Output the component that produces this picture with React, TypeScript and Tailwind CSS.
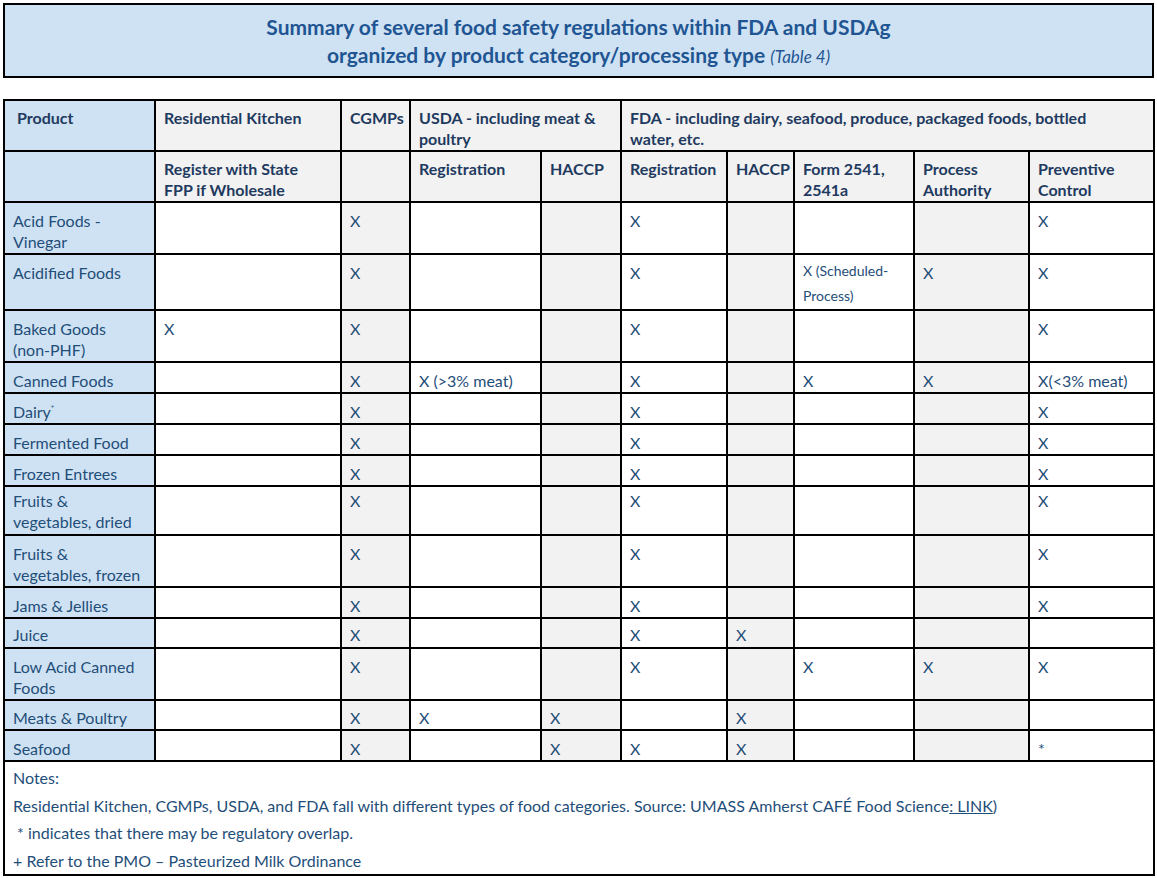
import React from "react";

type Cell = string | React.ReactNode;

const X = "X";

const rows: { product: React.ReactNode; cells: Cell[]; pad?: string }[] = [
  { product: <>Acid Foods -<br />Vinegar</>, cells: ["", X, "", "", X, "", "", "", X] },
  {
    product: "Acidified Foods",
    cells: [
      "", X, "", "", X, "",
      <span className="text-[14px] leading-[25px] block -mt-[4px]">X (Scheduled-<br />Process)</span>,
      X, X,
    ],
  },
  { product: <>Baked Goods<br />(non-PHF)</>, cells: [X, X, "", "", X, "", "", "", X] },
  { product: "Canned Foods", cells: ["", X, "X (>3% meat)", "", X, "", X, X, "X(<3% meat)"] },
  {
    product: <>Dairy<sup className="text-[6px] align-super">+</sup></>,
    cells: ["", X, "", "", X, "", "", "", X],
  },
  { product: "Fermented Food", cells: ["", X, "", "", X, "", "", "", X] },
  { product: "Frozen Entrees", cells: ["", X, "", "", X, "", "", "", X] },
  {
    product: <>Fruits &amp;<br />vegetables, dried</>,
    cells: ["", X, "", "", X, "", "", "", X],
    pad: "pt-[3px] pb-[2px]",
  },
  { product: <>Fruits &amp;<br />vegetables, frozen</>, cells: ["", X, "", "", X, "", "", "", X] },
  { product: "Jams & Jellies", cells: ["", X, "", "", X, "", "", "", X] },
  { product: "Juice", cells: ["", X, "", "", X, X, "", "", ""], pad: "pt-[5px] pb-[2px]" },
  { product: <>Low Acid Canned<br />Foods</>, cells: ["", X, "", "", X, "", X, X, X] },
  { product: "Meats & Poultry", cells: ["", X, X, X, "", X, "", "", ""], pad: "pt-[6px] pb-[1px]" },
  { product: "Seafood", cells: ["", X, "", X, X, X, "", "", "*"] },
];

// data columns with grey shading (index into cells)
const shaded = [1, 3, 5, 7];

const cellBase = "border-2 border-black align-top px-[8px] leading-[21px]";
const headBase = cellBase + " pt-[6px] pb-[1px] bg-[#f2f2f2] font-bold text-[#1f3a5f] text-left";

export default function App() {
  return (
    <div className="bg-white p-[3px] font-['Lato',sans-serif] text-[16px] text-[#1f4e79]">
      {/* title */}
      <div className="border-2 border-black bg-[#cfe2f3] pt-[8px] pb-[5px] text-center text-[#1f5592] font-bold text-[21px] leading-[28px]">
        <div>Summary of several food safety regulations within FDA and USDAg</div>
        <div>
          organized by product category/processing type{" "}
          <span className="font-normal italic text-[17px]">(Table 4)</span>
        </div>
      </div>

      <table className="mt-[21px] w-[1150px] table-fixed border-collapse border-2 border-black">
        <colgroup>
          <col className="w-[151px]" />
          <col className="w-[186px]" />
          <col className="w-[69px]" />
          <col className="w-[131px]" />
          <col className="w-[80px]" />
          <col className="w-[106px]" />
          <col className="w-[67px]" />
          <col className="w-[120px]" />
          <col className="w-[115px]" />
          <col className="w-[125px]" />
        </colgroup>
        <thead>
          <tr>
            <th className={cellBase + " pt-[6px] pb-[1px] pl-[12px] bg-[#cfe2f3] font-bold text-[#1f3a5f] text-left"}>
              Product
            </th>
            <th className={headBase}>Residential Kitchen</th>
            <th className={headBase}>CGMPs</th>
            <th colSpan={2} className={headBase}>
              <span className="whitespace-nowrap">USDA - including meat &amp;</span>
              <br />poultry
            </th>
            <th colSpan={5} className={headBase}>
              <span className="whitespace-nowrap">FDA - including dairy, seafood, produce, packaged foods, bottled</span>
              <br />water, etc.
            </th>
          </tr>
          <tr>
            <th className={cellBase + " pt-[6px] pb-[1px] bg-[#cfe2f3]"}></th>
            <th className={headBase}>Register with State<br />FPP if Wholesale</th>
            <th className={headBase}></th>
            <th className={headBase}>Registration</th>
            <th className={headBase}>HACCP</th>
            <th className={headBase}>Registration</th>
            <th className={headBase}>HACCP</th>
            <th className={headBase}>Form 2541,<br />2541a</th>
            <th className={headBase}>Process<br />Authority</th>
            <th className={headBase}>Preventive<br />Control</th>
          </tr>
        </thead>
        <tbody>
          {rows.map((r, i) => {
            const pad = r.pad ?? "pt-[7px] pb-[1px]";
            return (
              <tr key={i}>
                <td className={cellBase + " " + pad + " bg-[#cfe2f3] whitespace-nowrap"}>{r.product}</td>
                {r.cells.map((c, j) => (
                  <td
                    key={j}
                    className={
                      cellBase + " " + pad + " whitespace-nowrap" + (shaded.includes(j) ? " bg-[#f2f2f2]" : " bg-white")
                    }
                  >
                    {c}
                  </td>
                ))}
              </tr>
            );
          })}
          <tr>
            <td colSpan={10} className="border-2 border-black px-[8px] pt-[2px] pb-0 leading-[27.5px]">
              <div>Notes:</div>
              <div>
                Residential Kitchen, CGMPs, USDA, and FDA fall with different types of food categories. Source: UMASS
                Amherst CAFÉ Food Science<span className="underline">: LINK</span>)
              </div>
              <div>&nbsp;* indicates that there may be regulatory overlap.</div>
              <div>+ Refer to the PMO – Pasteurized Milk Ordinance</div>
            </td>
          </tr>
        </tbody>
      </table>
    </div>
  );
}
